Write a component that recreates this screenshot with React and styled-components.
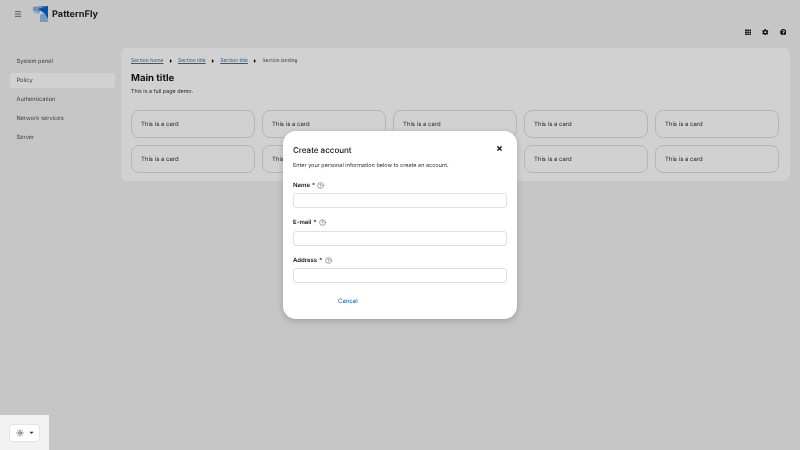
import React from 'react';
import styled, { createGlobalStyle } from 'styled-components';
import { FaTh, FaCog, FaQuestionCircle, FaTimes, FaCaretDown, FaCaretRight } from 'react-icons/fa';
import { CircleHelp, Menu, Sun } from 'lucide-react';

const GlobalStyle = createGlobalStyle`
  html, body {
    margin: 0;
    height: 100%;
    background: #f2f2f2;
    font-family: Inter, "Liberation Sans", sans-serif;
    color: #151515;
    text-rendering: geometricPrecision;
  }
  * { box-sizing: border-box; }
`;

const Page = styled.div`
  position: relative;
  width: 800px;
  height: 450px;
  overflow: hidden;
  background: #f2f2f2;
`;

const Masthead = styled.header`
  display: flex;
  align-items: center;
  height: 28px;
  padding-left: 14px;
  will-change: transform;
`;

const MenuButton = styled.span`
  display: flex;
  width: 18px;
  color: #333;
`;

const Brand = styled.div`
  display: flex;
  align-items: center;
  gap: 2px;
`;

const BrandName = styled.span`
  font-size: 9.2px;
  font-weight: 700;
  color: #1f1f1f;
`;

const Toolbar = styled.div`
  display: flex;
  justify-content: flex-end;
  align-items: center;
  gap: 11px;
  height: 8px;
  padding-right: 14px;
  color: #151515;
  font-size: 6.5px;
`;

const Body = styled.div`
  display: flex;
  gap: 6px;
  margin-top: 12px;
  will-change: transform;
`;

const Sidebar = styled.nav`
  display: flex;
  flex-direction: column;
  gap: 4px;
  width: 115px;
  padding: 6px 0 0 10px;
`;

const NavItem = styled.div`
  height: 15px;
  padding: 0 6.5px;
  border-radius: 3px;
  font-size: 5.7px;
  line-height: 15px;
  color: #4d4d4d;
  background: ${(p) => (p.$active ? '#fff' : 'transparent')};
`;

const Main = styled.main`
  width: 669px;
  height: 133px;
  padding: 10px 10px 0;
  border-radius: 6px;
  background: #fff;
`;

const Breadcrumb = styled.div`
  display: flex;
  align-items: center;
  height: 5px;
  margin-bottom: 9px;
  font-size: 5px;
`;

const Crumb = styled.a`
  color: #1a75d1;
  text-decoration: underline;
`;

const CrumbCurrent = styled.span`
  color: #4d4d4d;
  font-size: 4.8px;
`;

const CrumbDivider = styled.span`
  display: flex;
  justify-content: center;
  width: 14.5px;
  color: #151515;
  font-size: 6px;
`;

const Title = styled.h1`
  margin: 0;
  font-size: 9.6px;
  line-height: 13px;
  font-weight: 700;
`;

const Lead = styled.p`
  margin: 3px 0 0;
  font-size: 5.4px;
  line-height: 9px;
  color: #333;
`;

const CardGrid = styled.div`
  display: grid;
  grid-template-columns: repeat(5, 124px);
  grid-auto-rows: 28px;
  gap: 7px;
  margin-top: 13px;
`;

const Card = styled.div`
  display: flex;
  align-items: center;
  padding-left: 9px;
  border: 1px solid #dedede;
  border-radius: 8px;
  background: #fff;
  font-size: 6px;
  color: #333;
`;

const Backdrop = styled.div`
  position: absolute;
  inset: 0;
  background: rgba(0, 0, 0, 0.18);
`;

const Modal = styled.section`
  position: absolute;
  left: 283px;
  top: 131px;
  width: 234px;
  height: 188px;
  padding: 13px 10px 0;
  border-radius: 13px;
  background: #fff;
  box-shadow: 0 2px 6px rgba(0, 0, 0, 0.2);
  will-change: transform;
`;

const ModalHead = styled.div`
  display: flex;
  justify-content: space-between;
  align-items: flex-start;
`;

const ModalTitle = styled.h2`
  margin: 0;
  font-size: 8px;
  line-height: 12px;
  font-weight: 500;
`;

const CloseButton = styled.span`
  display: flex;
  margin: 1px 4.5px 0 0;
  font-size: 7px;
  color: #151515;
`;

const ModalText = styled.p`
  margin: 6px 0 0;
  font-size: 5.5px;
  line-height: 8.5px;
  color: #333;
`;

const Field = styled.div`
  margin-top: 9.5px;
`;

const Label = styled.label`
  display: flex;
  align-items: center;
  height: 10px;
  font-size: 6px;
  font-weight: 600;
  color: #151515;
`;

const Required = styled.span`
  margin: 0 2.5px 0 2px;
  font-weight: 400;
`;

const Input = styled.div`
  height: 15px;
  margin-top: 3px;
  border: 1px solid #e0e0e0;
  border-radius: 3px;
  background: #fff;
`;

const Actions = styled.div`
  display: flex;
  margin-top: 14px;
  padding-left: 45px;
`;

const CancelLink = styled.span`
  font-size: 6px;
  line-height: 9px;
  color: #0a5cab;
`;

const ThemeBox = styled.div`
  position: absolute;
  left: 0;
  bottom: 0;
  display: flex;
  align-items: center;
  width: 49px;
  height: 35px;
  padding-left: 10px;
  background: #f2f2f2;
`;

const ThemeSelect = styled.div`
  display: flex;
  align-items: center;
  gap: 4px;
  width: 29px;
  height: 16px;
  padding-left: 6px;
  border-radius: 3px;
  background: #fff;
  box-shadow: 0 0 0 1px #e4e4e4;
  color: #333;
  font-size: 7px;
`;

const CARDS = Array.from({ length: 10 }, (_, i) => i);

const Logo = () => (
  <svg width="18" height="18" viewBox="0 0 18 18">
    <polygon points="1,2 9,1 8,7 1,6" fill="#7fb3e6" />
    <polygon points="1,6 8,7 7,9 3,8" fill="#a9cdf0" />
    <polygon points="9,1 16,1 14,3 9,4" fill="#5a9ade" />
    <polygon points="6,4 16,1 16,14 12,8" fill="#0066cc" />
    <polygon points="8,10 12,8 16,14 16,17 8,17" fill="#8fbce9" />
  </svg>
);

const FormField = ({ label }) => (
  <Field>
    <Label>
      {label}
      <Required>*</Required>
      <CircleHelp size={7} strokeWidth={1.5} color="#333" />
    </Label>
    <Input />
  </Field>
);

const App = () => {
  return (
    <Page>
      <GlobalStyle />
      <Masthead>
        <MenuButton>
          <Menu size={8} />
        </MenuButton>
        <Brand>
          <Logo />
          <BrandName>PatternFly</BrandName>
        </Brand>
      </Masthead>
      <Toolbar>
        <FaTh />
        <FaCog />
        <FaQuestionCircle />
      </Toolbar>
      <Body>
        <Sidebar>
          <NavItem>System panel</NavItem>
          <NavItem $active>Policy</NavItem>
          <NavItem>Authentication</NavItem>
          <NavItem>Network services</NavItem>
          <NavItem>Server</NavItem>
        </Sidebar>
        <Main>
          <Breadcrumb>
            <Crumb>Section home</Crumb>
            <CrumbDivider><FaCaretRight /></CrumbDivider>
            <Crumb>Section title</Crumb>
            <CrumbDivider><FaCaretRight /></CrumbDivider>
            <Crumb>Section title</Crumb>
            <CrumbDivider><FaCaretRight /></CrumbDivider>
            <CrumbCurrent>Section landing</CrumbCurrent>
          </Breadcrumb>
          <Title>Main title</Title>
          <Lead>This is a full page demo.</Lead>
          <CardGrid>
            {CARDS.map((i) => (
              <Card key={i}>This is a card</Card>
            ))}
          </CardGrid>
        </Main>
      </Body>
      <Backdrop />
      <Modal>
        <ModalHead>
          <ModalTitle>Create account</ModalTitle>
          <CloseButton><FaTimes /></CloseButton>
        </ModalHead>
        <ModalText>Enter your personal information below to create an account.</ModalText>
        <FormField label="Name" />
        <FormField label="E-mail" />
        <FormField label="Address" />
        <Actions>
          <CancelLink>Cancel</CancelLink>
        </Actions>
      </Modal>
      <ThemeBox>
        <ThemeSelect>
          <Sun size={8} />
          <FaCaretDown />
        </ThemeSelect>
      </ThemeBox>
    </Page>
  );
};

export default App;
